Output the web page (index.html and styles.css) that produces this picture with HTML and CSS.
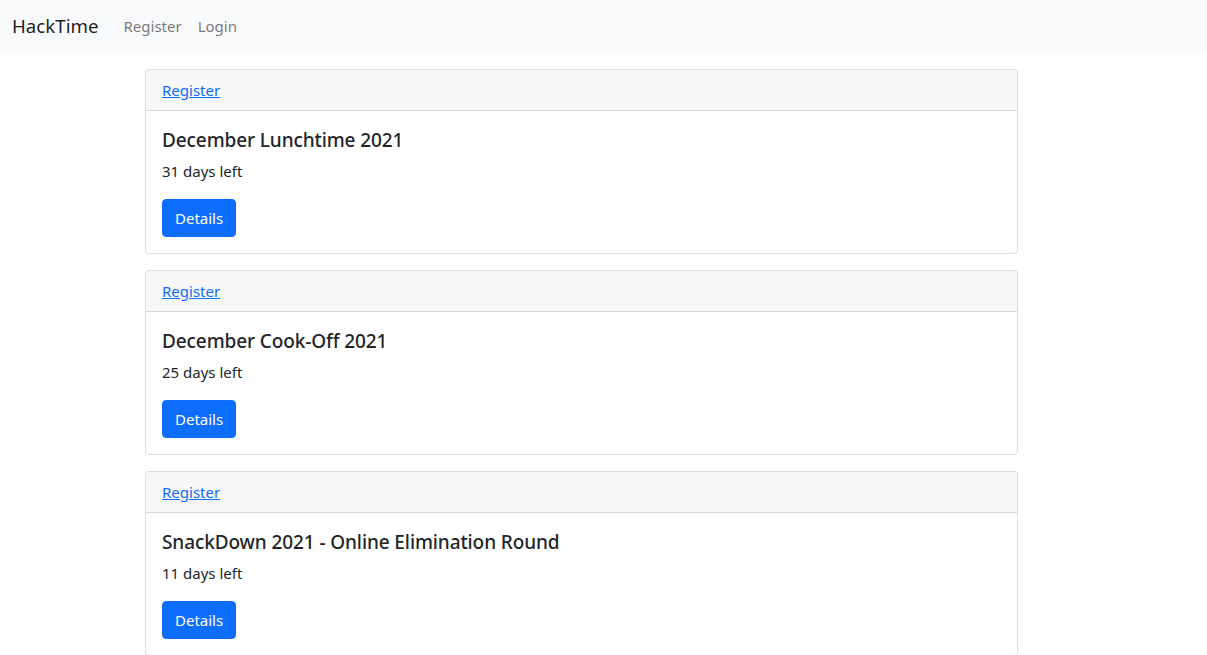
FILE: index.html
```html
<!DOCTYPE html>
<html lang="en">
<head>
<meta charset="utf-8">
<title>HackTime</title>
<link rel="stylesheet" href="styles.css">
</head>
<body>
<nav class="navbar">
  <a class="brand" href="#">HackTime</a>
  <ul class="nav">
    <li><a class="nav-link" href="#">Register</a></li>
    <li><a class="nav-link" href="#">Login</a></li>
  </ul>
</nav>
<main class="main">
  <div class="card">
    <div class="card-header"><a href="#">Register</a></div>
    <div class="card-body">
      <h5 class="card-title">December Lunchtime 2021</h5>
      <p class="card-text">31 days left</p>
      <a class="btn" href="#">Details</a>
    </div>
  </div>
  <div class="card">
    <div class="card-header"><a href="#">Register</a></div>
    <div class="card-body">
      <h5 class="card-title">December Cook-Off 2021</h5>
      <p class="card-text">25 days left</p>
      <a class="btn" href="#">Details</a>
    </div>
  </div>
  <div class="card">
    <div class="card-header"><a href="#">Register</a></div>
    <div class="card-body">
      <h5 class="card-title">SnackDown 2021 - Online Elimination Round</h5>
      <p class="card-text">11 days left</p>
      <a class="btn" href="#">Details</a>
    </div>
  </div>
</main>
</body>
</html>
```

FILE: styles.css
```css
* { box-sizing: border-box; }
html, body {
  margin: 0;
  padding: 0;
}
body {
  font-family: "Noto Sans", "Open Sans", sans-serif;
  font-size: 15px;
  line-height: 24px;
  color: #212529;
  background: #fff;
}
.navbar {
  display: flex;
  align-items: center;
  height: 53px;
  padding: 0 12px 2px;
  background: #f8f9fa;
}
.brand {
  font-size: 18.7px;
  color: rgba(0,0,0,.9);
  text-decoration: none;
  margin-right: 17px;
  line-height: 30px;
}
.nav {
  display: flex;
  list-style: none;
  margin: 0;
  padding: 0;
}
.nav-link {
  display: block;
  padding: 8px 8px;
  color: rgba(0,0,0,.55);
  text-decoration: none;
}
.main {
  padding: 16px 0 0 145px;
}
.card {
  width: 873px;
  border: 1px solid rgba(0,0,0,.125);
  border-radius: 4px;
  margin-bottom: 16px;
  background: #fff;
}
.card-header {
  padding: 8px 16px;
  background: rgba(0,0,0,.03);
  border-bottom: 1px solid rgba(0,0,0,.125);
  border-radius: 3px 3px 0 0;
}
.card-header a {
  color: #0d6efd;
}
.card-body {
  padding: 16px;
}
.card-title {
  margin: 0 0 7px;
  padding-top: 1px;
  font-size: 19px;
  font-weight: 500;
  line-height: 24px;
  letter-spacing: -0.1px;
}
.card-text {
  margin: 0 0 16px;
}
.btn {
  display: inline-block;
  padding: 6px 12px;
  border: 1px solid #0d6efd;
  border-radius: 4px;
  background: #0d6efd;
  color: #fff;
  text-decoration: none;
  line-height: 24px;
}
```
